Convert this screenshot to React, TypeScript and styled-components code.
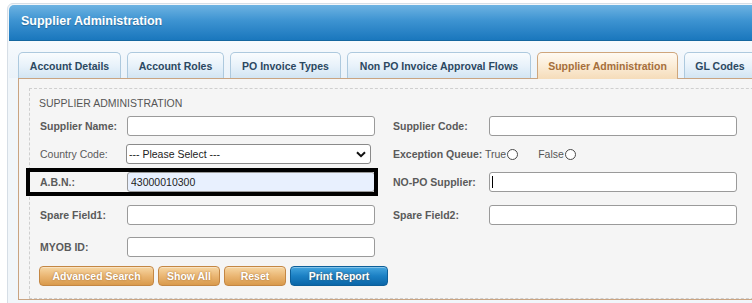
import styled, { createGlobalStyle } from "styled-components";

const GlobalStyle = createGlobalStyle`
  html, body {
    margin: 0;
    padding: 0;
    background: #ffffff;
    overflow: hidden;
  }
  body {
    font-family: "Liberation Sans", Arial, sans-serif;
  }
`;

// ---------------- Styled Components ----------------
const Page = styled.div`
  padding: 3px 0 0 7px;
  width: 752px;
  height: 303px;
  box-sizing: border-box;
  overflow: hidden;
`;

const Panel = styled.div`
  width: 790px;
  border: 1px solid #d6dee6;
  border-radius: 6px 6px 0 0;
  padding: 1px;
  background: #f1f6fa;
  height: 320px;
`;

const Header = styled.div`
  height: 36px;
  display: flex;
  align-items: center;
  padding: 0 0 3px 12px;
  box-sizing: border-box;
  border-radius: 5px 5px 0 0;
  background: linear-gradient(to bottom, #6db3e2 0%, #3d93d1 45%, #1a77bd 100%);
  border-bottom: 1px solid #15679f;

  h1 {
    margin: 0;
    font-size: 12.5px;
    font-weight: bold;
    color: #ffffff;
    text-shadow: 0 1px 1px rgba(0, 0, 0, 0.25);
  }
`;

const TabBar = styled.div`
  display: flex;
  gap: 6px;
  padding: 11px 0 0 9px;
  background: linear-gradient(to bottom, #f7fafd, #eaf2f9);
`;

const Tab = styled.div<{ $active?: boolean; $w: number }>`
  box-sizing: border-box;
  width: ${({ $w }) => $w}px;
  flex-shrink: 0;
  display: flex;
  align-items: center;
  justify-content: center;
  font-size: 10.5px;
  font-weight: bold;
  white-space: nowrap;
  border-radius: 5px 5px 0 0;
  border: 1px solid ${({ $active }) => ($active ? "#cfa67c" : "#adc9de")};
  border-bottom: none;
  color: ${({ $active }) => ($active ? "#a56f3c" : "#2b4861")};
  background: ${({ $active }) =>
    $active
      ? "linear-gradient(to bottom, #fffaf2 0%, #fbecd6 50%, #f5dcba 100%)"
      : "linear-gradient(to bottom, #f9fcfe 0%, #e8f2fa 50%, #d3e5f3 100%)"};
  position: relative;
  z-index: ${({ $active }) => ($active ? 2 : 1)};
  margin-bottom: ${({ $active }) => ($active ? "-1px" : "0")};
  height: ${({ $active }) => ($active ? "27px" : "26px")};
`;

const ContentBox = styled.div`
  margin-left: 9px;
  border: 1px solid #c9a482;
  border-right: none;
  background: #f5f5f5;
  padding: 9px 0 0 10px;
`;

const Fieldset = styled.div`
  border: 1px dashed #cfcfcf;
  border-right: none;
  padding: 8px 0 12px 10px;
`;

const Legend = styled.div`
  font-size: 10.5px;
  line-height: 13px;
  color: #555555;
  margin-left: -1px;
`;

const Row = styled.div<{ $mt: number }>`
  display: flex;
  gap: 18px;
  margin-top: ${({ $mt }) => $mt}px;
  height: 20px;
`;

const Field = styled.div<{ $labelWidth: number; $highlight?: boolean }>`
  display: grid;
  grid-template-columns: ${({ $labelWidth }) => $labelWidth}px 248px;
  align-items: center;
  position: relative;

  ${({ $highlight }) =>
    $highlight &&
    `
    &::before {
      content: "";
      position: absolute;
      left: -14px;
      right: -3px;
      top: -4px;
      bottom: -4px;
      border: 4px solid #000;
      pointer-events: none;
    }
  `}
`;

const Label = styled.label<{ $regular?: boolean }>`
  font-size: 10.5px;
  font-weight: ${({ $regular }) => ($regular ? "normal" : "bold")};
  color: #5a5a5a;
  white-space: nowrap;
`;

const TextInput = styled.input<{ $autofill?: boolean }>`
  box-sizing: border-box;
  width: 248px;
  height: 20px;
  margin: 0;
  padding: 0 3px;
  border: 1px solid #9a9a9a;
  border-radius: 3px;
  background: ${({ $autofill }) => ($autofill ? "#e8f0fe" : "#ffffff")};
  font-family: "Liberation Sans", Arial, sans-serif;
  font-size: 10.5px;
  color: #222222;
  outline: none;
`;

const InputWrap = styled.div`
  position: relative;
  height: 20px;
`;

const Caret = styled.span`
  position: absolute;
  left: 3px;
  top: 4px;
  width: 1px;
  height: 12px;
  background: #000;
`;

const Select = styled.select`
  box-sizing: border-box;
  width: 245px;
  height: 20px;
  margin: 0 0 0 -1px;
  padding: 0 2px;
  border: 1px solid #8a8a8a;
  border-radius: 3px;
  background: #ffffff;
  appearance: none;
  font-family: "Liberation Sans", Arial, sans-serif;
  font-size: 10.5px;
  color: #222222;
`;

const Chevron = styled.svg`
  position: absolute;
  right: 9px;
  top: 7px;
  pointer-events: none;
`;

const RadioGroup = styled.div`
  display: flex;
  align-items: center;
  font-size: 10.5px;
  color: #555555;
`;

const RadioOption = styled.label<{ $ml?: number }>`
  display: flex;
  align-items: center;
  margin-left: ${({ $ml }) => $ml ?? 0}px;
`;

const Radio = styled.input`
  appearance: none;
  width: 11px;
  height: 11px;
  margin: 0 0 0 1px;
  border: 1px solid #4a4a4a;
  border-radius: 50%;
  background: #ffffff;
`;

const ButtonRow = styled.div`
  display: flex;
  gap: 4px;
  margin-top: 9px;
  margin-left: -1px;
`;

const Button = styled.button<{ $w: number; $blue?: boolean }>`
  width: ${({ $w }) => $w}px;
  height: 20px;
  padding: 0;
  border-radius: 4px;
  border: 1px solid ${({ $blue }) => ($blue ? "#0d5f99" : "#c48744")};
  background: ${({ $blue }) =>
    $blue
      ? "linear-gradient(to bottom, #45a6df 0%, #1b80c4 50%, #0b66a8 100%)"
      : "linear-gradient(to bottom, #f7d7a4 0%, #eab673 50%, #d99a4c 100%)"};
  color: #ffffff;
  font-family: "Liberation Sans", Arial, sans-serif;
  font-size: 10.5px;
  font-weight: bold;
  text-shadow: 0 0 2px rgba(110, 60, 10, 0.6);
  box-shadow: inset 0 1px 0 rgba(255, 255, 255, 0.35);
`;

// ---------------- Component ----------------
const tabs = [
  { label: "Account Details", w: 103 },
  { label: "Account Roles", w: 97 },
  { label: "PO Invoice Types", w: 111 },
  { label: "Non PO Invoice Approval Flows", w: 184 },
  { label: "Supplier Administration", w: 141 },
  { label: "GL Codes", w: 72 },
];

export default function App() {
  return (
    <Page>
      <GlobalStyle />
      <Panel>
        <Header>
          <h1>Supplier Administration</h1>
        </Header>

        <TabBar>
          {tabs.map((t) => (
            <Tab key={t.label} $w={t.w} $active={t.label === "Supplier Administration"}>
              {t.label}
            </Tab>
          ))}
        </TabBar>

        <ContentBox>
          <Fieldset>
            <Legend>SUPPLIER ADMINISTRATION</Legend>

            <Row $mt={6}>
              <Field $labelWidth={87}>
                <Label>Supplier Name:</Label>
                <TextInput />
              </Field>
              <Field $labelWidth={96}>
                <Label>Supplier Code:</Label>
                <TextInput />
              </Field>
            </Row>

            <Row $mt={8}>
              <Field $labelWidth={87}>
                <Label $regular>Country Code:</Label>
                <InputWrap>
                  <Select defaultValue="">
                    <option value="">--- Please Select ---</option>
                  </Select>
                  <Chevron width="10" height="7" viewBox="0 0 10 7">
                    <path d="M1 1.2 L5 5.2 L9 1.2" fill="none" stroke="#111" strokeWidth="2" />
                  </Chevron>
                </InputWrap>
              </Field>
              <Field $labelWidth={92}>
                <Label>Exception Queue:</Label>
                <RadioGroup>
                  <RadioOption>
                    True
                    <Radio type="radio" name="exq" />
                  </RadioOption>
                  <RadioOption $ml={20}>
                    False
                    <Radio type="radio" name="exq" />
                  </RadioOption>
                </RadioGroup>
              </Field>
            </Row>

            <Row $mt={8}>
              <Field $labelWidth={87} $highlight>
                <Label>A.B.N.:</Label>
                <TextInput $autofill defaultValue="43000010300" />
              </Field>
              <Field $labelWidth={96}>
                <Label>NO-PO Supplier:</Label>
                <InputWrap>
                  <TextInput />
                  <Caret />
                </InputWrap>
              </Field>
            </Row>

            <Row $mt={13}>
              <Field $labelWidth={87}>
                <Label>Spare Field1:</Label>
                <TextInput />
              </Field>
              <Field $labelWidth={96}>
                <Label>Spare Field2:</Label>
                <TextInput />
              </Field>
            </Row>

            <Row $mt={12}>
              <Field $labelWidth={87}>
                <Label>MYOB ID:</Label>
                <TextInput />
              </Field>
            </Row>

            <ButtonRow>
              <Button $w={115}>Advanced Search</Button>
              <Button $w={62}>Show All</Button>
              <Button $w={62}>Reset</Button>
              <Button $w={98} $blue>
                Print Report
              </Button>
            </ButtonRow>
          </Fieldset>
        </ContentBox>
      </Panel>
    </Page>
  );
}
